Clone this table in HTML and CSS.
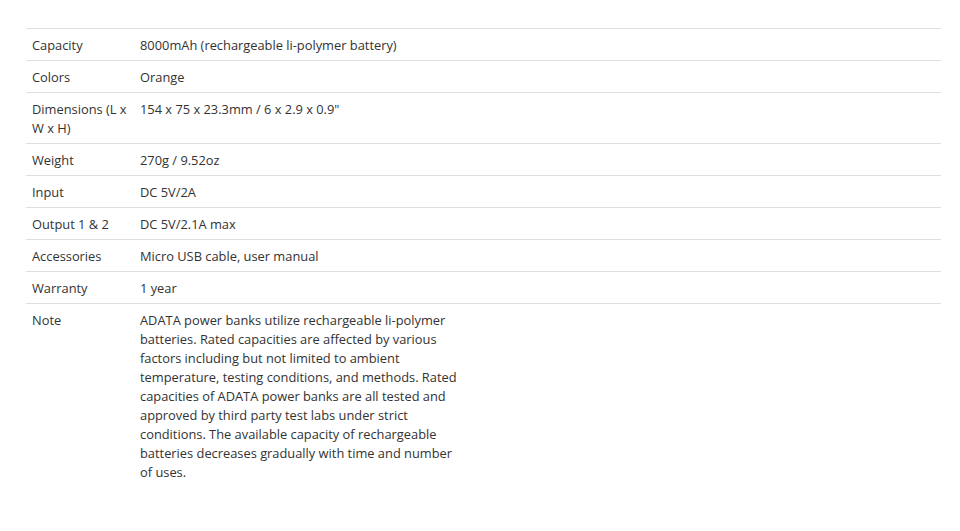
FILE: index.html
```html
<!DOCTYPE html>
<html>
<head>
<meta charset="utf-8">
<link rel="stylesheet" href="styles.css">
</head>
<body>
<div class="page">
<table class="specs">
<tbody>
<tr><th>Capacity</th><td>8000mAh (rechargeable li-polymer battery)</td></tr>
<tr><th>Colors</th><td>Orange</td></tr>
<tr><th>Dimensions (L x W x H)</th><td>154 x 75 x 23.3mm / 6 x 2.9 x 0.9"</td></tr>
<tr><th>Weight</th><td>270g / 9.52oz</td></tr>
<tr><th>Input</th><td>DC 5V/2A</td></tr>
<tr><th>Output 1 &amp; 2</th><td>DC 5V/2.1A max</td></tr>
<tr><th>Accessories</th><td>Micro USB cable, user manual</td></tr>
<tr><th>Warranty</th><td>1 year</td></tr>
<tr><th>Note</th><td><div class="note">ADATA power banks utilize rechargeable li-polymer batteries. Rated capacities are affected by various factors including but not limited to ambient temperature, testing conditions, and methods. Rated capacities of ADATA power banks are all tested and approved by third party test labs under strict conditions. The available capacity of rechargeable batteries decreases gradually with time and number of uses.</div></td></tr>
</tbody>
</table>
</div>
</body>
</html>
```
FILE: styles.css
```css
html, body {
  margin: 0;
  padding: 0;
  background: #fff;
}
.page {
  padding: 28px 19px 0 26px;
}
.specs {
  width: 100%;
  border-collapse: collapse;
  font-family: "Open Sans", "Noto Sans", sans-serif;
  font-size: 12.85px;
  line-height: 19px;
  color: #333;
}
.specs tr {
  border-top: 1px solid #dedede;
}
.specs th,
.specs td {
  padding: 7px 6px 5px 6px;
  text-align: left;
  vertical-align: top;
  font-weight: normal;
}
.specs th {
  width: 96px;
}
.note {
  width: 322px;
}
```
